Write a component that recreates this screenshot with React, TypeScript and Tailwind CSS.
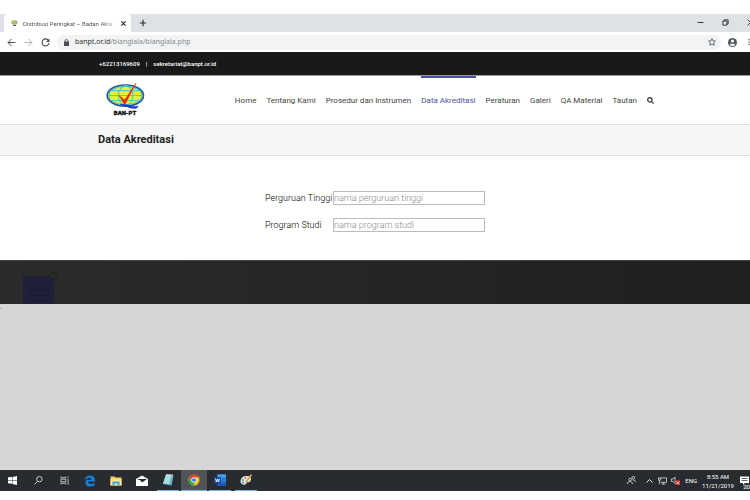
import React from 'react';

const navItems = [
  'Home',
  'Tentang Kami',
  'Prosedur dan Instrumen',
  'Data Akreditasi',
  'Peraturan',
  'Galeri',
  'QA Material',
  'Tautan',
];

const fields = [
  { id: 'perguruan', label: 'Perguruan Tinggi', placeholder: 'nama perguruan tinggi' },
  { id: 'prodi', label: 'Program Studi', placeholder: 'nama program studi' },
];

const BrowserChrome: React.FC = () => (
  <div className="overflow-hidden text-[#3c4043]">
    <div className="flex h-[18px] items-stretch bg-[#dee1e6]">
      <div className="ml-1 flex w-[127px] items-center rounded-t bg-white pl-[7px] pr-1">
        <svg viewBox="0 0 14 12" className="h-[6px] w-[7px] shrink-0" aria-hidden="true">
          <ellipse cx="7" cy="5" rx="6" ry="4" fill="#b5d24a" stroke="#6ba3b0" />
          <path d="M5 4l2 3 3-5" fill="none" stroke="#d98a4b" strokeWidth="1.2" />
          <path d="M4 11h6" stroke="#555" strokeWidth="2" />
        </svg>
        <span className="ml-[5px] w-[93px] whitespace-nowrap bg-linear-to-r from-[#4a4d51] from-85% to-[#4a4d5130] bg-clip-text text-[6px] text-transparent">
          Distribusi Peringkat – Badan Akre
        </span>
        <button aria-label="Close tab" className="ml-1">
          <svg viewBox="0 0 10 10" className="h-[7px] w-[7px]" stroke="#333" strokeWidth="1.8">
            <path d="M2 2l6 6M8 2L2 8" />
          </svg>
        </button>
      </div>
      <button aria-label="New tab" className="ml-2">
        <svg viewBox="0 0 10 10" className="h-2 w-2" stroke="#333" strokeWidth="1.5">
          <path d="M5 1v8M1 5h8" />
        </svg>
      </button>
      <div className="-mr-1 ml-auto flex shrink-0 items-center gap-[18px] pb-[2px]">
        <button aria-label="Minimize">
          <svg viewBox="0 0 12 12" className="h-[7px] w-[7px]" stroke="#333" strokeWidth="1.8">
            <path d="M1 6h10" />
          </svg>
        </button>
        <button aria-label="Restore">
          <svg viewBox="0 0 12 12" className="h-[7px] w-[7px]" fill="none" stroke="#333" strokeWidth="1.6">
            <path d="M1.5 3.5h7v7h-7zM3.5 3.5v-2h7v7h-2" />
          </svg>
        </button>
        <button aria-label="Close">
          <svg viewBox="0 0 12 12" className="h-[7px] w-[7px]" stroke="#333" strokeWidth="1.6">
            <path d="M1 1l10 10M11 1L1 11" />
          </svg>
        </button>
      </div>
    </div>
    <div className="flex h-5 items-center bg-white pl-[7px]">
      <div className="flex items-center gap-2">
        <button aria-label="Back">
          <svg viewBox="0 0 18 18" className="h-[9px] w-[9px]" fill="none" stroke="#4a4d51" strokeWidth="2">
            <path d="M17 9H2M9 2L2 9l7 7" />
          </svg>
        </button>
        <button aria-label="Forward">
          <svg viewBox="0 0 18 18" className="h-[9px] w-[9px]" fill="none" stroke="#b0b3b7" strokeWidth="2">
            <path d="M1 9h15M9 2l7 7-7 7" />
          </svg>
        </button>
        <button aria-label="Reload">
          <svg viewBox="0 0 18 18" className="h-[9px] w-[9px]" fill="none" stroke="#4a4d51" strokeWidth="2.2">
            <path d="M15 5a7 7 0 1 0 1 5" />
            <path d="M17 1v7h-7z" fill="#4a4d51" stroke="none" />
          </svg>
        </button>
      </div>
      <div className="ml-[7px] flex h-[15px] flex-1 items-center rounded-full bg-[#f1f3f4] pl-[7px] pr-[5px]">
        <svg viewBox="0 0 10 14" className="h-[7px] w-[5px]" aria-hidden="true">
          <rect x="0" y="5" width="10" height="9" rx="1" fill="#4a4d51" />
          <path d="M2 6V4a3 3 0 0 1 6 0v2" fill="none" stroke="#4a4d51" strokeWidth="1.6" />
        </svg>
        <span className="ml-[6px] font-['Noto_Sans',sans-serif] text-[7px] text-[#85898d]">
          <span className="text-[#333]">banpt.or.id</span>/bianglala/bianglala.php
        </span>
        <button aria-label="Bookmark this page" className="ml-auto">
          <svg viewBox="0 0 18 18" className="h-2 w-2" fill="none" stroke="#4a4d51" strokeWidth="1.8">
            <path d="M9 1.5l2.3 5 5.4.6-4 3.7 1.1 5.4L9 13.5l-4.8 2.7 1.1-5.4-4-3.7 5.4-.6z" />
          </svg>
        </button>
      </div>
      <button aria-label="Profile" className="ml-[7px]">
        <svg viewBox="0 0 18 18" className="h-[9px] w-[9px]">
          <circle cx="9" cy="9" r="9" fill="#55585c" />
          <circle cx="9" cy="6" r="3" fill="#fff" />
          <path d="M3.5 13.5c1-3 10-3 11 0a7 7 0 0 1-11 0z" fill="#fff" />
        </svg>
      </button>
      <button aria-label="Menu" className="ml-[11px]">
        <svg viewBox="0 0 2 10" className="h-2 w-[2px]" fill="#777">
          <circle cx="1" cy="2" r="1" />
          <circle cx="1" cy="5" r="1" />
          <circle cx="1" cy="8" r="1" />
        </svg>
      </button>
    </div>
  </div>
);

const Logo: React.FC = () => (
  <svg viewBox="0 0 120 100" className="h-[33px] w-10" role="img" aria-label="BAN-PT">
    <ellipse cx="61" cy="38" rx="55" ry="32" fill="#e2f32a" stroke="#2556a0" strokeWidth="5" />
    <g fill="none" stroke="#4fd0b8" strokeWidth="3.5">
      <path d="M15 23h92M8 38h106M15 53h92" />
      <ellipse cx="62" cy="38" rx="22" ry="30" />
      <ellipse cx="61" cy="38" rx="51" ry="28" stroke="#38b8d8" strokeWidth="3" />
    </g>
    <path d="M42 38l17 28L93 1 63 46l-5 5z" fill="#e8281c" stroke="#e8281c" strokeWidth="2" />
    <path d="M46 65c22-2 34 11 54 5l-5 6c-20 3-30-7-49-11z" fill="#1732c8" stroke="#1732c8" strokeWidth="2" />
    <text x="60" y="97" textAnchor="middle" fontSize="18" fontWeight="900" fill="#111" stroke="#111" fontFamily="Roboto, sans-serif">
      BAN-PT
    </text>
  </svg>
);

const SiteHeader: React.FC = () => (
  <header>
    <div className="flex h-[23px] items-center gap-[6px] bg-[#191919] pl-[99px] text-[6px] font-medium text-white">
      <span>+62213169609</span>
      <span>|</span>
      <a href="mailto:sekretariat@banpt.or.id">sekretariat@banpt.or.id</a>
    </div>
    <div className="flex h-[50px] border-b border-[#e0e0e0] border-t border-t-[#999] bg-white pl-[105px] pr-24">
      <a href="#" className="mt-[7px] self-start">
        <Logo />
      </a>
      <nav className="ml-auto flex gap-[10px] whitespace-nowrap text-[8px] text-[#444]">
        {navItems.map((item) => (
          <a
            key={item}
            href="#"
            className={
              item === 'Data Akreditasi'
                ? 'flex items-center border-t-2 border-[#4b53a0] text-[#4b53a0]'
                : 'flex items-center border-t-2 border-transparent'
            }
          >
            {item}
          </a>
        ))}
        <button aria-label="Search">
          <svg viewBox="0 0 16 16" className="h-[7px] w-[7px]" fill="none" stroke="#333" strokeWidth="2.8">
            <circle cx="6.5" cy="6.5" r="5" />
            <path d="M10.5 10.5l4.5 4.5" />
          </svg>
        </button>
      </nav>
    </div>
    <div className="flex h-[31px] items-center border-b border-[#e0e0e0] bg-[#f6f6f6] pl-[98px]">
      <h1 className="text-[11px] font-bold text-[#222]">Data Akreditasi</h1>
    </div>
  </header>
);

const SearchForm: React.FC = () => (
  <form className="grid grid-cols-[68px_152px] gap-y-[13px] bg-white pb-7 pl-[265px] pt-[35px]">
    {fields.map((field) => (
      <React.Fragment key={field.id}>
        <label htmlFor={field.id} className="self-center whitespace-nowrap text-[9px] font-light leading-[14px] text-black">
          {field.label}
        </label>
        <input
          id={field.id}
          type="text"
          placeholder={field.placeholder}
          className="h-[14px] border border-[#bbb] bg-white text-[9px] font-light text-[#333] placeholder:text-[#888]"
        />
      </React.Fragment>
    ))}
  </form>
);

const Footer: React.FC = () => (
  <footer className="flex h-11 overflow-hidden border-t border-[#444] bg-linear-to-r from-[#2b2b2b] to-[#1f1f1f] pl-[23px] pt-[10px]">
    <svg viewBox="0 0 35 34" className="h-[34px] w-[35px]" aria-hidden="true">
      <rect x="0" y="5" width="31" height="30" fill="#20203a" />
      <path d="M4 19h23M4 24h23M4 30h23" stroke="#1b1b30" strokeWidth="1.5" />
      <circle cx="30" cy="5" r="3.5" fill="#222b25" stroke="#1d211e" />
    </svg>
  </footer>
);

const apps = [
  {
    name: 'Edge',
    state: '',
    icon: (
      <path
        d="M1 11C2 4 6 1 12 1c7 0 11 5 10 12H8c0 6 8 6 13 3v5C14 25 3 24 3 15c0-4 3-7 6-8-1 1-2 2-2 3h8c0-6-9-6-14 1z"
        fill="#1381dc"
      />
    ),
  },
  {
    name: 'File Explorer',
    state: '',
    icon: (
      <>
        <path d="M1 3h8l2 2h12v16H1z" fill="#f5cf62" />
        <path d="M1 8h22v13H1z" fill="#fce597" />
        <path d="M5 21v-8h14v8h-4v-4H9v4z" fill="#41a8d8" />
      </>
    ),
  },
  {
    name: 'Mail',
    state: '',
    icon: (
      <>
        <path d="M0 8l12-7 12 7v14H0z" fill="#fff" />
        <path d="M2 8h20l-10 7-3-4z" fill="#25292d" />
      </>
    ),
  },
  {
    name: 'Notepad',
    state: 'open',
    icon: (
      <>
        <path d="M8 1l15 2-4 20-17-3z" fill="#67b6c5" />
        <path d="M8 1l11 1-5 18-12-1z" fill="#a9dfe4" />
        <path d="M8 2h14" stroke="#e5e5e5" strokeWidth="2" />
      </>
    ),
  },
  {
    name: 'Chrome',
    state: 'active',
    icon: (
      <>
        <circle cx="12" cy="12" r="11" fill="#fbc116" />
        <path d="M2.5 6.5a11 11 0 0 1 19 0L12 7l-5 8z" fill="#e33b2e" />
        <path d="M2.5 6.5L8 15l6 2-4 6A11 11 0 0 1 2.5 6.5z" fill="#2da94f" />
        <circle cx="12" cy="12" r="5.5" fill="#fff" />
        <circle cx="12" cy="12" r="4.2" fill="#4285f4" />
      </>
    ),
  },
  {
    name: 'Word',
    state: 'open',
    icon: (
      <>
        <path d="M7 1h17v22H7z" fill="#2b7cd3" />
        <path d="M7 1h17v6H7z" fill="#41a5ee" />
        <path d="M7 17h17v6H7z" fill="#185abd" />
        <path d="M0 6h14v13H0z" fill="#1049a5" />
        <path d="M3 9l2 7 2-6 2 6 2-7" fill="none" stroke="#fff" strokeWidth="1.8" />
      </>
    ),
  },
  {
    name: 'Paint',
    state: 'open',
    icon: (
      <>
        <path d="M1 14C2 6 8 3 15 4c8 1 9 8 4 12-3 2-5-1-7 2 1 5-12 5-11-4z" fill="#e0e8ed" />
        <circle cx="6" cy="12" r="2" fill="#55a845" />
        <circle cx="11" cy="8" r="2" fill="#e76435" />
        <circle cx="6" cy="17" r="2" fill="#3c8ccc" />
        <path d="M22 0l2 3-9 12-4 8 1-10z" fill="#dfa34f" />
      </>
    ),
  },
];

const appClass: Record<string, string> = {
  '': 'flex w-[26px] items-center justify-center',
  open: 'flex w-[22px] mx-[2px] items-center justify-center border-b border-[#76b9ed]',
  active: 'flex w-[26px] items-center justify-center border-b border-[#76b9ed] bg-[#505458]',
};

const Taskbar: React.FC = () => (
  <div className="flex h-[21px] items-stretch overflow-hidden bg-[#282b2f] text-white">
    <button aria-label="Start" className="flex w-[25px] items-center justify-center">
      <svg viewBox="0 0 20 20" className="h-[9px] w-[9px]" fill="#fff">
        <path d="M0 3l9-1v7H0zM10 2l10-2v9H10zM0 10h9v7l-9-1zM10 10h10v10l-10-2z" />
      </svg>
    </button>
    <button aria-label="Search Windows" className="flex w-[26px] items-center justify-center">
      <svg viewBox="0 0 20 20" className="h-[9px] w-[9px]" fill="none" stroke="#ddd" strokeWidth="2">
        <circle cx="12" cy="7" r="6" />
        <path d="M8 12l-7 7" />
      </svg>
    </button>
    <button aria-label="Task View" className="flex w-[26px] items-center justify-center">
      <svg viewBox="0 0 20 20" className="h-[9px] w-[9px]" fill="none" stroke="#ddd" strokeWidth="1.8">
        <path d="M2 1v3h11V1M2 7h11v6H2zM2 19v-3h11v3M18 1v3M18 9v10M16 7h3" />
      </svg>
    </button>
    {apps.map((app) => (
      <button key={app.name} aria-label={app.name} className={appClass[app.state]}>
        <svg viewBox="0 0 24 24" className="h-3 w-3">
          {app.icon}
        </svg>
      </button>
    ))}
    <div className="ml-auto flex shrink-0 items-center">
      <svg viewBox="0 0 20 20" className="h-[9px] w-[9px]" fill="none" stroke="#ddd" strokeWidth="1.8" aria-hidden="true">
        <circle cx="7" cy="8" r="3" />
        <path d="M1 18c0-8 11-8 11 0" />
        <circle cx="14" cy="4" r="3" />
        <path d="M13 9c4 0 6 2 6 5" />
      </svg>
      <svg viewBox="0 0 14 8" className="ml-[10px] h-1 w-[7px]" fill="none" stroke="#eee" strokeWidth="2" aria-hidden="true">
        <path d="M1 7l6-6 6 6" />
      </svg>
      <svg viewBox="0 0 20 18" className="ml-[5px] h-2 w-[9px]" fill="none" stroke="#ddd" strokeWidth="1.8" aria-hidden="true">
        <path d="M6 2h13v10H6M8 16h8M12 12v4M1 2h5v5H1zM3 7v9" />
      </svg>
      <svg viewBox="0 0 18 18" className="ml-1 h-[9px] w-[9px]" aria-hidden="true">
        <path d="M1 6h3l4-4v13l-4-4H1z" fill="none" stroke="#ddd" strokeWidth="1.6" />
        <path d="M9 9h9v9H9z" fill="#e43b3b" />
        <path d="M11 11l5 5M16 11l-5 5" stroke="#fff" strokeWidth="1.4" />
      </svg>
      <span className="ml-[5px] text-[6px]">ENG</span>
      <span className="ml-[5px] w-8 text-center text-[6px] leading-[9px]">
        8:55 AM
        <br />
        11/21/2019
      </span>
      <span className="relative ml-[6px]">
        <svg viewBox="0 0 20 20" className="h-[10px] w-[10px]" aria-hidden="true">
          <path d="M0 1h18v13h-8l-4 5v-5H0z" fill="#fff" />
          <path d="M3 5h12M3 9h12" stroke="#333" strokeWidth="1.5" />
        </svg>
        <span className="absolute -bottom-1 right-0 rounded-full bg-[#3b3f43] text-[6px] leading-[7px]">20</span>
      </span>
    </div>
  </div>
);

const App: React.FC = () => {
  return (
    <div className="flex min-h-screen flex-col overflow-hidden bg-white pb-[9px] pt-[14px] font-[Roboto,sans-serif]">
      <BrowserChrome />
      <SiteHeader />
      <main>
        <SearchForm />
      </main>
      <Footer />
      <div className="flex-1 bg-[#d7d5d6] text-[6px] leading-[7px] text-[#555]">-</div>
      <Taskbar />
    </div>
  );
};

export default App;
